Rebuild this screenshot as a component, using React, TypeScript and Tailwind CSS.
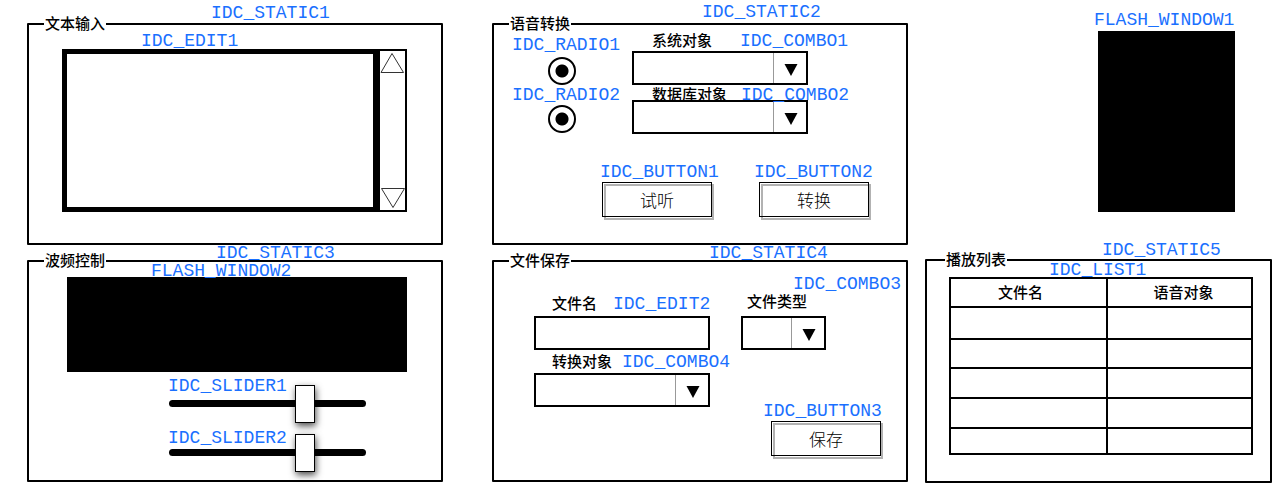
import { useState, type ReactNode } from "react";

function Tag({ children, className = "" }: { children: ReactNode; className?: string }) {
  return (
    <span
      className={`block h-[18px] whitespace-nowrap font-['Liberation_Mono',monospace] text-[18px] leading-5 text-[#1a70ff] ${className}`}
    >
      {children}
    </span>
  );
}

function Panel({
  title,
  tag,
  tagClass,
  className = "",
  legendClass = "ml-[15px]",
  children,
}: {
  title: string;
  tag: string;
  tagClass: string;
  className?: string;
  legendClass?: string;
  children: ReactNode;
}) {
  return (
    <div className={`relative ${className}`}>
      <fieldset className="min-h-[228px] min-w-0 rounded-[1px] border-2 border-black pb-1">
        <legend className={`px-px text-[15px] leading-[14px] font-medium ${legendClass}`}>{title}</legend>
        {children}
      </fieldset>
      <Tag className={`absolute ${tagClass}`}>{tag}</Tag>
    </div>
  );
}

function Combo({ id }: { id: string }) {
  return (
    <div className="relative h-[34px]">
      <select id={id} className="h-full w-full appearance-none border-2 border-black bg-white px-2 text-[15px]">
        <option></option>
      </select>
      <span className="pointer-events-none absolute inset-y-[2px] right-[2px] flex w-[33px] items-center justify-center border-l border-[#999] pt-[3px] pl-0.5">
        <svg width="14" height="12" viewBox="0 0 14 12" aria-hidden="true">
          <path d="M0.5 0H13.5L7 12Z" fill="#000" />
        </svg>
      </span>
    </div>
  );
}

function PushButton({ children, className = "" }: { children: ReactNode; className?: string }) {
  return (
    <button
      type="button"
      className={`relative mt-0.5 block h-[35px] w-[110px] border border-black bg-white pt-1 text-[17px] font-light after:pointer-events-none after:absolute after:top-px after:-right-[3px] after:-bottom-[4px] after:left-px after:border-2 after:border-black/30 ${className}`}
    >
      {children}
    </button>
  );
}

function Slider({ label }: { label: string }) {
  const [value, setValue] = useState(71);
  return (
    <input
      type="range"
      aria-label={label}
      value={value}
      onChange={(e) => setValue(Number(e.target.value))}
      className="relative block h-[38px] w-full appearance-none bg-transparent [&::-webkit-slider-runnable-track]:h-[7px] [&::-webkit-slider-runnable-track]:rounded-full [&::-webkit-slider-runnable-track]:bg-black [&::-webkit-slider-thumb]:-mt-[15px] [&::-webkit-slider-thumb]:h-[38px] [&::-webkit-slider-thumb]:w-5 [&::-webkit-slider-thumb]:appearance-none [&::-webkit-slider-thumb]:border [&::-webkit-slider-thumb]:border-black [&::-webkit-slider-thumb]:bg-white [&::-webkit-slider-thumb]:shadow-[1px_3px_7px_rgba(0,0,0,0.7)]"
    />
  );
}

const radioClass =
  "block size-7 appearance-none rounded-full border-2 border-black bg-white checked:bg-[radial-gradient(circle,#000_6px,#fff_7px)]";
const labelClass = "whitespace-nowrap text-[15px] leading-5 font-medium";
const rowHeights = ["h-8", "h-[29px]", "h-[30px]", "h-[30px]", "h-[26px]"];

export default function App() {
  return (
    <main className="flex items-start bg-white pr-2 pb-4 pl-[27px] font-['Liberation_Sans','Noto_Sans_CJK_SC',sans-serif] text-black">
      <div className="min-w-0 flex-[416_1_0%] pt-[17px]">
        <Panel title="文本输入" tag="IDC_STATIC1" tagClass="-top-[14px] left-[184px]">
          <Tag className="ml-28">
            <label htmlFor="edit1">IDC_EDIT1</label>
          </Tag>
          <div className="mr-[34px] ml-[33px] flex h-[163px]">
            <textarea id="edit1" className="block min-w-0 flex-1 resize-none border-[5px] border-black bg-white p-1 text-[15px] outline-none" />
            <div className="flex w-[29px] flex-col justify-between border-2 border-black">
              <button type="button" aria-label="向上滚动">
                <svg width="25" height="23" viewBox="0 0 25 23" className="block" fill="none" stroke="#333">
                  <path d="M12 2.5L23.5 21.5H1Z" />
                </svg>
              </button>
              <button type="button" aria-label="向下滚动">
                <svg width="25" height="23" viewBox="0 0 25 23" className="block" fill="none" stroke="#333">
                  <path d="M1.5 1.5H24.5L13 20.5Z" />
                </svg>
              </button>
            </div>
          </div>
        </Panel>

        <Panel title="波频控制" tag="IDC_STATIC3" tagClass="-top-[11px] left-[189px]" className="mt-[9px]">
          <div className="relative mt-[9px] mr-[34px] ml-[38px] h-[95px] bg-black">
            <Tag className="absolute -top-4 left-[84px]">FLASH_WINDOW2</Tag>
          </div>
          <div className="mt-1 mr-[75px] ml-[140px]">
            <div className="h-2">
              <Tag className="-ml-px">IDC_SLIDER1</Tag>
            </div>
            <Slider label="IDC_SLIDER1" />
            <div className="mt-1.5 h-[5px]">
              <Tag className="-ml-px">IDC_SLIDER2</Tag>
            </div>
            <Slider label="IDC_SLIDER2" />
          </div>
        </Panel>
      </div>

      <div className="ml-[49px] min-w-0 flex-[416_1_0%] pt-[17px]">
        <Panel title="语音转换" tag="IDC_STATIC2" tagClass="-top-[15px] left-[210px]">
          <div className="flex">
            <div className="flex w-[138px] shrink-0 flex-col pt-1 pl-[18px]">
              <Tag>
                <label htmlFor="radio1">IDC_RADIO1</label>
              </Tag>
              <input id="radio1" name="radio1" type="radio" defaultChecked className={`${radioClass} mt-1 ml-9`} />
              <Tag>
                <label htmlFor="radio2">IDC_RADIO2</label>
              </Tag>
              <input id="radio2" name="radio2" type="radio" defaultChecked className={`${radioClass} mt-0.5 ml-9`} />
            </div>
            <div className="mr-[98px] min-w-0 flex-1">
              <div className="relative z-10 flex h-5 items-start gap-7 pl-5">
                <label htmlFor="combo1" className={labelClass}>系统对象</label>
                <Tag>IDC_COMBO1</Tag>
              </div>
              <Combo id="combo1" />
              <div className="relative z-10 flex h-[15px] items-start gap-3.5 pl-5">
                <label htmlFor="combo2" className={labelClass}>数据库对象</label>
                <Tag>IDC_COMBO2</Tag>
              </div>
              <Combo id="combo2" />
            </div>
          </div>
          <div className="mt-7 flex pl-[106px]">
            <div className="w-[154px] shrink-0">
              <Tag>IDC_BUTTON1</Tag>
              <PushButton className="ml-0.5">试听</PushButton>
            </div>
            <div>
              <Tag>IDC_BUTTON2</Tag>
              <PushButton className="ml-[5px]">转换</PushButton>
            </div>
          </div>
        </Panel>

        <Panel title="文件保存" tag="IDC_STATIC4" tagClass="-top-[11px] left-[217px]" className="mt-[9px]">
          <div className="flex">
            <div className="ml-10 min-w-0 flex-[176_1_0%] pt-[26px]">
              <div className="flex h-[22px] items-start gap-4 pl-[18px]">
                <label htmlFor="edit2" className={labelClass}>文件名</label>
                <Tag>IDC_EDIT2</Tag>
              </div>
              <input id="edit2" type="text" className="block h-[34px] w-full border-2 border-black bg-white px-2 text-[15px] outline-none" />
              <div className="flex h-[23px] items-start gap-2.5 pt-0.5 pl-[18px]">
                <label htmlFor="combo4" className={labelClass}>转换对象</label>
                <Tag>IDC_COMBO4</Tag>
              </div>
              <Combo id="combo4" />
            </div>
            <div className="ml-[31px] w-[165px] shrink-0 pt-1.5">
              <Tag className="ml-[52px]">IDC_COMBO3</Tag>
              <div className="flex h-6 items-start pl-1.5">
                <label htmlFor="combo3" className={labelClass}>文件类型</label>
              </div>
              <div className="w-[85px]">
                <Combo id="combo3" />
              </div>
              <Tag className="mt-[51px] ml-[22px]">IDC_BUTTON3</Tag>
              <PushButton className="ml-[30px]">保存</PushButton>
            </div>
          </div>
        </Panel>
      </div>

      <div className="ml-[17px] min-w-0 flex-[347_1_0%] pt-2.5">
        <div className="mr-[37px] ml-auto w-[141px]">
          <Tag>FLASH_WINDOW1</Tag>
          <div className="mt-[3px] ml-1 h-[181px] bg-black" />
        </div>
        <Panel title="播放列表" tag="IDC_STATIC5" tagClass="-top-[13px] left-[177px]" legendClass="ml-[18px] px-0.5" className="mt-[41px]">
          <div className="relative mt-2.5 mr-[17px] mb-[22px] ml-[22px]">
            <table className="w-full table-fixed border-collapse">
              <thead>
                <tr className="h-[29px]">
                  <th className="w-[52%] border-2 border-black p-0 pr-4 text-[15px] leading-5 font-medium">文件名</th>
                  <th className="border-2 border-black p-0 pl-2 text-[15px] leading-5 font-medium">语音对象</th>
                </tr>
              </thead>
              <tbody>
                {rowHeights.map((h, i) => (
                  <tr key={i} className={h}>
                    <td className="border-2 border-black p-0"></td>
                    <td className="border-2 border-black p-0"></td>
                  </tr>
                ))}
              </tbody>
            </table>
            <Tag className="absolute -top-[17px] left-[100px]">IDC_LIST1</Tag>
          </div>
        </Panel>
      </div>
    </main>
  );
}
